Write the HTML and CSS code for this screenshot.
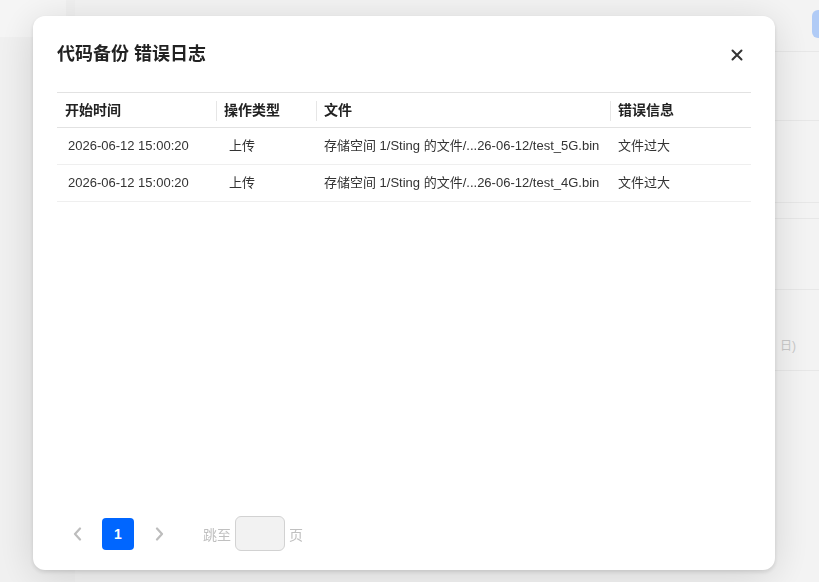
FILE: index.html
```html
<!DOCTYPE html>
<html lang="zh-CN">
<head>
  <meta charset="UTF-8">
  <title>代码备份 错误日志</title>
  <link rel="stylesheet" href="styles.css">
</head>
<body>

  <!-- 背景页面 -->
  <div class="page">
    <div class="side">
      <div class="side-top"></div>
    </div>
    <div class="main">
      <div class="main-head"><span class="head-btn"></span></div>
      <div class="main-row r1"></div>
      <div class="main-row r2"></div>
      <div class="main-row r3"></div>
      <div class="main-row r4"></div>
      <div class="main-row r5"><span class="faded">日)</span></div>
    </div>
  </div>

  <div class="mask"></div>

  <!-- 弹窗 -->
  <div class="modal">
    <div class="modal-head">
      <h2>代码备份 错误日志</h2>
      <button class="close" aria-label="关闭">
        <svg width="12" height="12" viewBox="0 0 12 12">
          <path d="M1.5 1.5L10.5 10.5M10.5 1.5L1.5 10.5" stroke="#333" stroke-width="2" stroke-linecap="round"/>
        </svg>
      </button>
    </div>

    <div class="modal-body">
      <table class="log-table">
        <thead>
          <tr>
            <th class="c-time">开始时间</th>
            <th class="c-type"><span class="sep"></span>操作类型</th>
            <th class="c-file"><span class="sep"></span>文件</th>
            <th class="c-err"><span class="sep"></span>错误信息</th>
          </tr>
        </thead>
        <tbody>
          <tr>
            <td class="c-time">2026-06-12 15:00:20</td>
            <td class="c-type">上传</td>
            <td class="c-file">存储空间 1/Sting 的文件/...26-06-12/test_5G.bin</td>
            <td class="c-err">文件过大</td>
          </tr>
          <tr>
            <td class="c-time">2026-06-12 15:00:20</td>
            <td class="c-type">上传</td>
            <td class="c-file">存储空间 1/Sting 的文件/...26-06-12/test_4G.bin</td>
            <td class="c-err">文件过大</td>
          </tr>
        </tbody>
      </table>
    </div>

    <div class="pager">
      <span class="pg-arrow">
        <svg width="9" height="14" viewBox="0 0 9 14"><path d="M7 1.5L2 7l5 5.5" fill="none" stroke="#bdbdbd" stroke-width="2.2" stroke-linecap="round" stroke-linejoin="round"/></svg>
      </span>
      <span class="pg-num">1</span>
      <span class="pg-arrow">
        <svg width="9" height="14" viewBox="0 0 9 14"><path d="M2 1.5L7 7l-5 5.5" fill="none" stroke="#bdbdbd" stroke-width="2.2" stroke-linecap="round" stroke-linejoin="round"/></svg>
      </span>
      <div class="jump">
        <span>跳至</span>
        <input type="text" class="jump-input">
        <span>页</span>
      </div>
    </div>
  </div>

</body>
</html>
```

FILE: styles.css
```css
html, body {
  margin: 0;
  height: 100%;
}

body {
  background-color: #f5f5f5;
  font-family: "Liberation Sans", "Noto Sans CJK SC", sans-serif;
  color: #333;
  overflow: hidden;
}

/* 背景页面 */
.page {
  display: flex;
  height: 100%;
}

.side {
  width: 75px;
  background-color: #f5f5f5;
}

.side-top {
  height: 37px;
  width: 66px;
  background-color: #fafafa;
}

.main {
  flex: 1;
  background-color: #f8f8f8;
}

.main-head {
  height: 51px;
  border-bottom: 1px solid #ececec;
  display: flex;
  justify-content: flex-end;
  align-items: flex-start;
}

.head-btn {
  margin-top: 10px;
  width: 20px;
  height: 28px;
  margin-right: -13px;
  border-radius: 6px;
  background-color: #b4d0fb;
}

.main-row {
  border-bottom: 1px solid #ececec;
}

.r1 { height: 68px; }
.r2 { height: 81px; }
.r3 { height: 15px; }
.r4 { height: 70px; }
.r5 {
  height: 80px;
  display: flex;
  justify-content: flex-end;
  align-items: flex-end;
}

.faded {
  color: #cdcdcd;
  font-size: 12px;
  margin-right: 23px;
  margin-bottom: 17px;
}

.mask {
  position: fixed;
  inset: 0;
  background-color: rgba(0, 0, 0, 0.02);
}

/* 弹窗 */
.modal {
  position: fixed;
  left: 33px;
  top: 16px;
  width: 742px;
  height: 554px;
  background-color: #fff;
  border-radius: 12px;
  box-shadow: 0 2px 4px rgba(0, 0, 0, 0.12), 0 6px 40px rgba(0, 0, 0, 0.14);
  display: flex;
  flex-direction: column;
  box-sizing: border-box;
  padding: 0 24px;
}

.modal-head {
  display: flex;
  justify-content: space-between;
  align-items: center;
  padding-top: 27px;
  height: 22px;
}

.modal-head h2 {
  margin: 0;
  font-size: 18px;
  font-weight: bold;
  color: #222;
  line-height: 22px;
}

.close {
  border: none;
  background: none;
  padding: 0;
  margin-right: 8px;
  margin-top: 2px;
  width: 12px;
  height: 12px;
  display: flex;
  cursor: pointer;
}

.modal-body {
  flex: 1;
  margin-top: 27px;
}

.log-table {
  width: 100%;
  border-collapse: collapse;
  table-layout: fixed;
}

.log-table th {
  position: relative;
  height: 34px;
  text-align: left;
  font-size: 14px;
  font-weight: bold;
  color: #222;
  line-height: 18px;
  padding: 0 0 0 8px;
  border-top: 1px solid #e2e2e2;
  border-bottom: 1px solid #e2e2e2;
}

.sep {
  position: absolute;
  left: 0;
  top: 8px;
  height: 20px;
  border-left: 1px solid #e6e6e6;
}

.log-table td {
  height: 35px;
  font-size: 13px;
  line-height: 18px;
  color: #333;
  padding: 0 0 1px 8px;
  border-bottom: 1px solid #efefef;
  white-space: nowrap;
  overflow: hidden;
}

.log-table th.c-time { width: 151px; }
.log-table th.c-type { width: 92px; }
.log-table th.c-file { width: 286px; }

.log-table td.c-time { padding-left: 11px; }
.log-table td.c-type { padding-left: 13px; }

/* 分页 */
.pager {
  display: flex;
  align-items: center;
  gap: 9px;
  padding-left: 4px;
  height: 35px;
  margin-bottom: 19px;
}

.pg-arrow {
  width: 32px;
  height: 32px;
  display: flex;
  align-items: center;
  justify-content: center;
}

.pg-num {
  width: 32px;
  height: 32px;
  border-radius: 4px;
  background-color: #0066ff;
  color: #fff;
  font-size: 14px;
  font-weight: bold;
  display: flex;
  align-items: center;
  justify-content: center;
}

.jump {
  margin-left: 19px;
  display: flex;
  align-items: center;
  gap: 4px;
  font-size: 14px;
  color: #c0c0c0;
}

.jump-input {
  width: 50px;
  height: 35px;
  box-sizing: border-box;
  border: 1px solid #d2d2d2;
  border-radius: 6px;
  background-color: #f2f2f2;
  outline: none;
}
```
